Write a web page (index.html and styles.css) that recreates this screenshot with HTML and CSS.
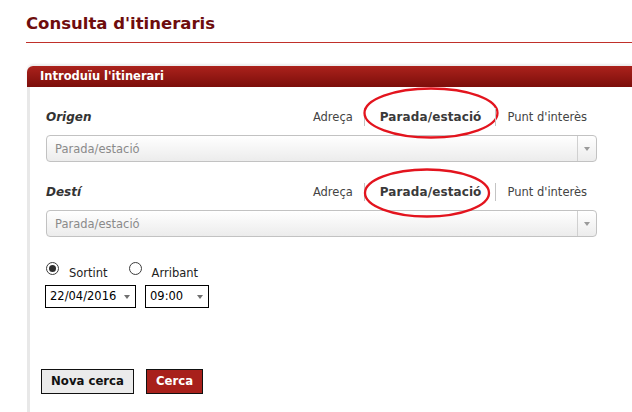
FILE: index.html
```html
<!DOCTYPE html>
<html lang="ca">
<head>
<meta charset="utf-8">
<title>Consulta d'itineraris</title>
<link rel="stylesheet" href="styles.css">
</head>
<body>
<div class="page">
  <h1 class="title">Consulta d'itineraris</h1>

  <div class="panel">
    <div class="panel-head">Introduïu l'itinerari</div>
    <div class="panel-body">

      <div class="field-row">
        <span class="field-label">Origen</span>
        <ul class="tabs">
          <li class="tab">Adreça</li>
          <li class="tab tab-active">Parada/estació
            <svg class="mark mark-1" width="138" height="52" viewBox="0 0 138 52"><ellipse cx="69" cy="26" rx="66.5" ry="24.5" fill="none" stroke="#e3141e" stroke-width="2.3"/></svg>
          </li>
          <li class="tab">Punt d'interès</li>
        </ul>
      </div>
      <div class="combo">
        <span class="combo-text">Parada/estació</span>
        <span class="combo-btn"><span class="tri-small"></span></span>
      </div>

      <div class="field-row field-row-2">
        <span class="field-label">Destí</span>
        <ul class="tabs">
          <li class="tab">Adreça</li>
          <li class="tab tab-active">Parada/estació
            <svg class="mark mark-2" width="128" height="50" viewBox="0 0 128 50"><ellipse cx="64" cy="25" rx="62" ry="23.5" fill="none" stroke="#e3141e" stroke-width="2.3"/></svg>
          </li>
          <li class="tab">Punt d'interès</li>
        </ul>
      </div>
      <div class="combo">
        <span class="combo-text">Parada/estació</span>
        <span class="combo-btn"><span class="tri-small"></span></span>
      </div>

      <div class="radio-row">
        <span class="radio radio-on"></span>
        <span class="radio-label">Sortint</span>
        <span class="radio"></span>
        <span class="radio-label">Arribant</span>
      </div>

      <div class="when-row">
        <div class="sel sel-date"><span>22/04/2016</span><span class="tri"></span></div>
        <div class="sel sel-time"><span>09:00</span><span class="tri"></span></div>
      </div>

      <div class="actions">
        <button class="btn btn-plain">Nova cerca</button>
        <button class="btn btn-primary">Cerca</button>
      </div>

    </div>
  </div>
</div>
</body>
</html>
```

FILE: styles.css
```css
html, body {
  margin: 0;
  padding: 0;
  overflow: hidden;
  background: #ffffff;
}

body {
  font-family: "DejaVu Sans", Verdana, sans-serif;
  color: #333333;
}

.page {
  padding-left: 26px;
}

.title {
  margin: 14px 0 0 0;
  font-size: 16.5px;
  line-height: 20px;
  font-weight: bold;
  color: #6e0d0d;
  padding-bottom: 8px;
  border-bottom: 1px solid #c0302a;
}

.panel {
  margin: 23px 0 0 1px;
}

.panel-head {
  height: 21px;
  line-height: 21px;
  padding-left: 13px;
  font-size: 11.5px;
  font-weight: bold;
  color: #ffffff;
  background: linear-gradient(#ab221c, #7c0e0b);
  border-top-left-radius: 6px;
  box-shadow: 0 -2px 2px rgba(0, 0, 0, 0.08);
}

.panel-body {
  border-left: 3px solid #e8e8e8;
  padding: 20px 35px 30px 16px;
}

.field-row {
  display: flex;
  align-items: center;
  justify-content: space-between;
  height: 20px;
}

.field-row-2 {
  margin-top: 20px;
}

.field-label {
  font-size: 12px;
  line-height: 20px;
  font-weight: bold;
  font-style: italic;
  color: #333333;
}

.tabs {
  list-style: none;
  margin: 0;
  padding: 0 10px 0 0;
  display: flex;
  align-items: center;
}

.tab {
  position: relative;
  font-size: 11.5px;
  line-height: 18px;
  color: #444444;
  padding: 0 11px;
  border-left: 1px solid #c4c4c4;
}

.tab:first-child {
  border-left: none;
}

.tab:last-child {
  padding-right: 0;
}

.tab-active {
  font-size: 12px;
  font-weight: bold;
  letter-spacing: 0.1px;
  color: #3a3a3a;
  padding: 0 14px 0 15px;
}

.mark {
  position: absolute;
  pointer-events: none;
}

.mark-1 {
  left: -3px;
  top: -21px;
}

.mark-2 {
  left: -2px;
  top: -15px;
}

.combo {
  margin-top: 8px;
  height: 27px;
  box-sizing: border-box;
  border: 1px solid #c2c2c2;
  border-radius: 4px;
  background: linear-gradient(#ffffff, #ececec);
  display: flex;
  justify-content: space-between;
}

.combo-text {
  padding: 2px 0 0 8px;
  font-size: 11.5px;
  line-height: 23px;
  color: #8a8a8a;
}

.combo-btn {
  width: 18px;
  border-left: 1px solid #d0d0d0;
  display: flex;
  align-items: center;
  justify-content: center;
}

.tri-small {
  width: 0;
  height: 0;
  border-left: 3px solid transparent;
  border-right: 3px solid transparent;
  border-top: 4px solid #9a9a9a;
}

.radio-row {
  margin-top: 24px;
  height: 20px;
  display: flex;
  align-items: flex-start;
}

.radio {
  margin-top: 1px;
  width: 13px;
  height: 13px;
  box-sizing: border-box;
  border: 1px solid #3c3c3c;
  border-radius: 50%;
  background: #ffffff;
  display: flex;
  align-items: center;
  justify-content: center;
}

.radio-on::after {
  content: "";
  width: 7px;
  height: 7px;
  border-radius: 50%;
  background: #2e2e2e;
}

.radio-label {
  margin: 4px 21px 0 10px;
  font-size: 11.5px;
  line-height: 16px;
  color: #222222;
}

.when-row {
  margin-top: 4px;
  margin-left: -1px;
  display: flex;
  gap: 9px;
}

.sel {
  height: 23px;
  box-sizing: border-box;
  border: 1px solid #000000;
  background: #ffffff;
  display: flex;
  align-items: center;
  justify-content: space-between;
  padding: 0 5px 0 4px;
  font-size: 11.5px;
  line-height: 21px;
  color: #000000;
}

.sel-date {
  width: 91px;
}

.sel-time {
  width: 64px;
}

.tri {
  width: 0;
  height: 0;
  border-left: 3.5px solid transparent;
  border-right: 3.5px solid transparent;
  border-top: 4px solid #707070;
}

.actions {
  margin: 61px 0 0 -5px;
  display: flex;
  gap: 12px;
}

.btn {
  height: 25px;
  box-sizing: border-box;
  border: 1px solid #111111;
  border-radius: 0;
  padding: 0 9px;
  font-family: "DejaVu Sans", Verdana, sans-serif;
  font-size: 11.7px;
  font-weight: bold;
  line-height: 23px;
}

.btn-plain {
  width: 93px;
  background: #ebebeb;
  color: #111111;
}

.btn-primary {
  width: 57px;
  background: #a8201b;
  color: #ffffff;
}
```
